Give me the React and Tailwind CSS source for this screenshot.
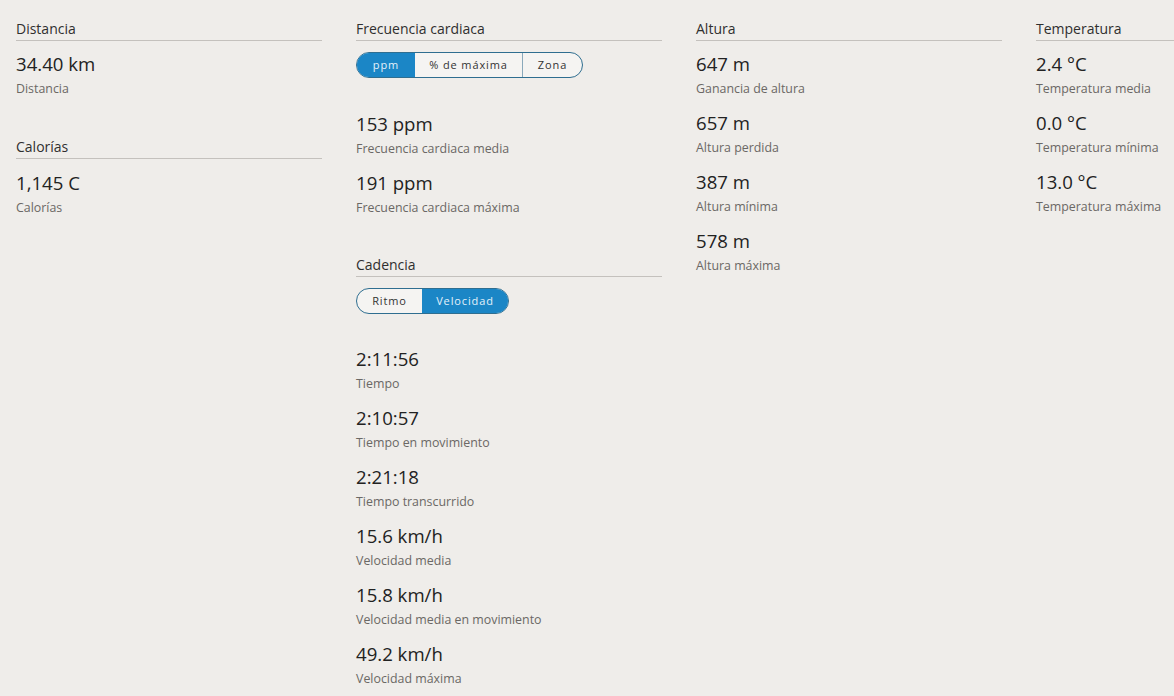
import React from "react";

const font = { fontFamily: '"Open Sans", "Liberation Sans", sans-serif' };

const Title = ({ children, className = "" }) => (
  <div
    className={`border-b border-[#c4c1bd] pb-[1px] text-[14px] leading-[20px] text-[#2f2f2f] ${className}`}
  >
    {children}
  </div>
);

const Stat = ({ value, label }) => (
  <div className="mb-[14px]">
    <div className="text-[18.6px] leading-[24px] text-[#222]">{value}</div>
    <div className="mt-[5px] text-[12.4px] leading-[16px] text-[#6b6865]">{label}</div>
  </div>
);

const Toggle = ({ options, active }) => (
  <div className="flex h-[26px] w-fit overflow-hidden rounded-full border border-[#2f6e90] bg-[#f5f4f2]">
    {options.map((opt, i) => (
      <div
        key={opt.label}
        className={`flex items-center justify-center text-[11px] tracking-[0.08em] ${
          i === active ? "bg-[#1b86c6] text-[#e4f1fa]" : "text-[#333]"
        } ${i > 0 && i !== active && i - 1 !== active ? "border-l border-[#8aa9bb]" : ""}`}
        style={{ width: opt.w }}
      >
        {opt.label}
      </div>
    ))}
  </div>
);

export default function App() {
  return (
    <div
      className="flex h-[696px] w-[1174px] gap-[34px] overflow-hidden bg-[#efedea] pl-4 pt-[19px]"
      style={font}
    >
      <div className="w-[306px] shrink-0">
        <Title>Distancia</Title>
        <div className="mt-[11px]">
          <Stat value="34.40 km" label="Distancia" />
        </div>
        <Title className="mt-[40px]">Calorías</Title>
        <div className="mt-[12px]">
          <Stat value="1,145 C" label="Calorías" />
        </div>
      </div>

      <div className="w-[306px] shrink-0">
        <Title>Frecuencia cardiaca</Title>
        <div className="mt-[11px]">
          <Toggle
            active={0}
            options={[
              { label: "ppm", w: 58 },
              { label: "% de máxima", w: 107 },
              { label: "Zona", w: 60 },
            ]}
          />
        </div>
        <div className="mt-[34px]">
          <Stat value="153 ppm" label="Frecuencia cardiaca media" />
          <Stat value="191 ppm" label="Frecuencia cardiaca máxima" />
        </div>
        <Title className="mt-[39px]">Cadencia</Title>
        <div className="mt-[11px]">
          <Toggle
            active={1}
            options={[
              { label: "Ritmo", w: 65 },
              { label: "Velocidad", w: 86 },
            ]}
          />
        </div>
        <div className="mt-[33px]">
          <Stat value="2:11:56" label="Tiempo" />
          <Stat value="2:10:57" label="Tiempo en movimiento" />
          <Stat value="2:21:18" label="Tiempo transcurrido" />
          <Stat value="15.6 km/h" label="Velocidad media" />
          <Stat value="15.8 km/h" label="Velocidad media en movimiento" />
          <Stat value="49.2 km/h" label="Velocidad máxima" />
        </div>
      </div>

      <div className="w-[306px] shrink-0">
        <Title>Altura</Title>
        <div className="mt-[11px]">
          <Stat value="647 m" label="Ganancia de altura" />
          <Stat value="657 m" label="Altura perdida" />
          <Stat value="387 m" label="Altura mínima" />
          <Stat value="578 m" label="Altura máxima" />
        </div>
      </div>

      <div className="w-[306px] shrink-0">
        <Title>Temperatura</Title>
        <div className="mt-[11px]">
          <Stat value="2.4 °C" label="Temperatura media" />
          <Stat value="0.0 °C" label="Temperatura mínima" />
          <Stat value="13.0 °C" label="Temperatura máxima" />
        </div>
      </div>
    </div>
  );
}
